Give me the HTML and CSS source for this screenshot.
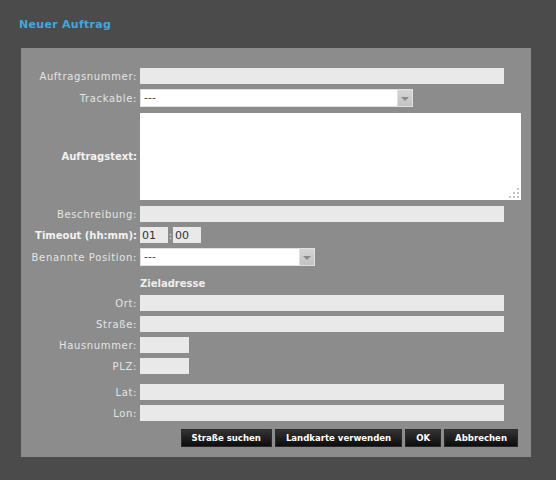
FILE: index.html
```html
<!DOCTYPE html>
<html lang="de">
<head>
    <meta charset="UTF-8">
    <title>Neuer Auftrag</title>
    <link rel="stylesheet" href="styles.css">
</head>
<body>
    <h1 class="title">Neuer Auftrag</h1>
    <div class="panel">
        <div class="form">
            <label class="label">Auftragsnummer:</label>
            <div class="field"><input class="text wide" type="text"></div>

            <label class="label">Trackable:</label>
            <div class="field">
                <div class="select trackable">
                    <span class="select-value">---</span>
                    <span class="select-btn"><i class="arrow"></i></span>
                </div>
            </div>

            <label class="label strong">Auftragstext:</label>
            <div class="field">
                <div class="area">
                    <svg class="grip" width="12" height="12" viewBox="0 0 12 12">
                        <rect x="9" y="1" width="2" height="2" fill="#c4c4c4"/>
                        <rect x="5" y="5" width="2" height="2" fill="#c4c4c4"/>
                        <rect x="9" y="5" width="2" height="2" fill="#c4c4c4"/>
                        <rect x="1" y="9" width="2" height="2" fill="#c4c4c4"/>
                        <rect x="5" y="9" width="2" height="2" fill="#c4c4c4"/>
                        <rect x="9" y="9" width="2" height="2" fill="#c4c4c4"/>
                    </svg>
                </div>
            </div>

            <label class="label">Beschreibung:</label>
            <div class="field"><input class="text wide" type="text"></div>

            <label class="label strong">Timeout (hh:mm):</label>
            <div class="field time">
                <input class="text tiny" type="text" value="01">
                <span class="colon">:</span>
                <input class="text tiny" type="text" value="00">
            </div>

            <label class="label">Benannte Position:</label>
            <div class="field">
                <div class="select position">
                    <span class="select-value">---</span>
                    <span class="select-btn"><i class="arrow"></i></span>
                </div>
            </div>

            <span></span>
            <div class="section">Zieladresse</div>

            <label class="label">Ort:</label>
            <div class="field"><input class="text wide" type="text"></div>

            <label class="label">Straße:</label>
            <div class="field"><input class="text wide" type="text"></div>

            <label class="label">Hausnummer:</label>
            <div class="field"><input class="text short" type="text"></div>

            <label class="label">PLZ:</label>
            <div class="field"><input class="text short" type="text"></div>

            <label class="label spaced">Lat:</label>
            <div class="field spaced"><input class="text wide" type="text"></div>

            <label class="label">Lon:</label>
            <div class="field"><input class="text wide" type="text"></div>
        </div>

        <div class="buttons">
            <button class="btn">Straße suchen</button>
            <button class="btn">Landkarte verwenden</button>
            <button class="btn">OK</button>
            <button class="btn">Abbrechen</button>
        </div>
    </div>
</body>
</html>
```

FILE: styles.css
```css
body {
    margin: 0;
    background-color: #4b4b4b;
    font-family: "DejaVu Sans", Verdana, sans-serif;
    font-size: 10px;
    width: 556px;
    height: 480px;
}
.title {
    margin: 0;
    padding: 18px 0 0 19px;
    height: 48px;
    box-sizing: border-box;
    font-size: 11px;
    line-height: 14px;
    font-weight: bold;
    letter-spacing: 0.3px;
    color: #3fa8dc;
}
.panel {
    margin-left: 21px;
    width: 510px;
    height: 409px;
    background-color: #8c8c8c;
    padding: 20px 0 0 0;
    box-sizing: border-box;
}
.form {
    display: grid;
    grid-template-columns: 116px auto;
    column-gap: 3px;
    row-gap: 5px;
}
.label {
    display: flex;
    align-items: center;
    justify-content: flex-end;
    color: #e4e4e4;
    letter-spacing: 0.65px;
    white-space: nowrap;
}
.label.strong {
    font-weight: bold;
    letter-spacing: 0;
    color: #f2f2f2;
}
.field {
    display: flex;
    align-items: center;
}
.spaced {
    margin-top: 5px;
}
.text {
    box-sizing: border-box;
    height: 16px;
    border: none;
    margin: 0;
    padding: 0 3px;
    background-color: #e9e9e9;
    font-family: "DejaVu Sans", Verdana, sans-serif;
    font-size: 11px;
    color: #333;
    outline: none;
}
.wide { width: 364px; }
.short { width: 49px; }
.tiny { width: 28px; padding: 0 2px; }
.time .colon {
    width: 5px;
    text-align: center;
    color: #e4e4e4;
    font-size: 10px;
}
.select {
    display: flex;
    height: 18px;
    background-color: #fff;
    box-sizing: border-box;
    border: 1px solid #e2e2e2;
}
.trackable { width: 273px; }
.position { width: 175px; }
.select-value {
    flex: 1;
    padding-left: 3px;
    font-size: 11px;
    line-height: 16px;
    color: #444;
}
.select-btn {
    width: 16px;
    margin: -1px -1px -1px 0;
    box-sizing: border-box;
    border: 1px solid #e0e0e0;
    background: linear-gradient(#d6d6d6, #c2c2c2);
    display: flex;
    align-items: center;
    justify-content: center;
}
.arrow {
    width: 0;
    height: 0;
    border-left: 4px solid transparent;
    border-right: 4px solid transparent;
    border-top: 4px solid #8a8a8a;
    margin-top: 1px;
}
.area {
    position: relative;
    width: 381px;
    height: 87px;
    margin: 1px 0;
    background-color: #fff;
}
.grip {
    position: absolute;
    right: 1px;
    bottom: 1px;
}
.section {
    padding-top: 6px;
    line-height: 13px;
    font-weight: bold;
    color: #eeeeee;
}
.buttons {
    display: flex;
    justify-content: flex-end;
    gap: 3px;
    margin-top: 8px;
    padding-right: 13px;
}
.btn {
    height: 18px;
    padding: 0 10px;
    border: 1px solid #2a2a2a;
    background: linear-gradient(#333, #0c0c0c);
    color: #fff;
    font-family: "DejaVu Sans Condensed", "DejaVu Sans", sans-serif;
    font-size: 9.5px;
    font-weight: bold;
    line-height: 16px;
    cursor: pointer;
}
```
